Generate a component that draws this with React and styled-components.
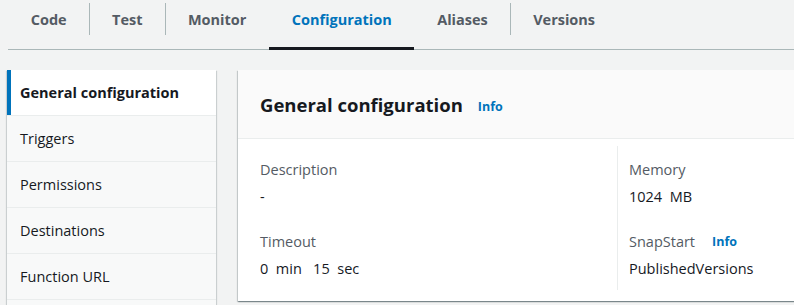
import React from "react";
import styled, { createGlobalStyle } from "styled-components";

const GlobalStyle = createGlobalStyle`
  html, body {
    margin: 0;
    padding: 0;
    background: #f2f3f3;
    font-family: "Open Sans", "Liberation Sans", sans-serif;
    color: #16191f;
    overflow: hidden;
  }
`;

const Page = styled.div`
  width: 794px;
  height: 305px;
  overflow: hidden;
`;

const TabBar = styled.div`
  display: flex;
  height: 50px;
  margin-left: 8px;
  border-bottom: 1px solid #aab7b8;
  box-sizing: border-box;
`;

const Tab = styled.div`
  position: relative;
  display: flex;
  align-items: flex-start;
  padding: 9px 22.7px 0;
  font-size: 14.5px;
  font-weight: 700;
  line-height: 22px;
  white-space: nowrap;
  color: ${(p) => (p.$active ? "#0073bb" : "#545b64")};
  border-bottom: 3px solid ${(p) => (p.$active ? "#16191f" : "transparent")};
  margin-bottom: -1px;
  & + &::before {
    content: "";
    position: absolute;
    left: 0;
    top: 3px;
    height: 32px;
    border-left: 1px solid #aab7b8;
  }
`;

const Layout = styled.div`
  display: flex;
  gap: 22px;
  padding: 20px 0 0 7px;
  align-items: flex-start;
`;

const Nav = styled.nav`
  flex: 0 0 209px;
  display: flex;
  flex-direction: column;
  background: #eaeded;
  box-shadow: 0 1px 1px 0 rgba(0, 28, 36, 0.25), 1px 1px 1px 0 rgba(0, 28, 36, 0.12),
    -1px 1px 1px 0 rgba(0, 28, 36, 0.12);
`;

const NavItem = styled.div`
  height: 45px;
  margin-bottom: 1px;
  display: flex;
  align-items: center;
  padding-left: ${(p) => (p.$active ? "9px" : "13px")};
  border-left: ${(p) => (p.$active ? "4px solid #0073bb" : "none")};
  background: ${(p) => (p.$active ? "#ffffff" : "#f8f9f9")};
  font-size: 14.5px;
  font-weight: ${(p) => (p.$active ? 700 : 400)};
  color: #16191f;
  white-space: nowrap;
`;

const Panel = styled.section`
  flex: 1 0 560px;
  background: #ffffff;
  box-shadow: 0 1px 1px 0 rgba(0, 28, 36, 0.3), 1px 1px 1px 0 rgba(0, 28, 36, 0.15),
    -1px 1px 1px 0 rgba(0, 28, 36, 0.15);
`;

const PanelHeader = styled.header`
  height: 69px;
  box-sizing: border-box;
  display: flex;
  align-items: center;
  gap: 15px;
  padding: 1px 22px 0;
  background: #fafafa;
  border-bottom: 1px solid #eaeded;
`;

const Title = styled.h2`
  margin: 0;
  font-size: 18.5px;
  font-weight: 700;
  line-height: 24px;
  color: #16191f;
  white-space: nowrap;
`;

const InfoLink = styled.a`
  font-size: 12.5px;
  font-weight: 700;
  color: #0073bb;
  text-decoration: none;
  margin-top: ${(p) => p.$offset || "3px"};
`;

const PanelBody = styled.div`
  display: grid;
  grid-template-columns: 357px 1fr;
  padding: 7px 0 11px 22px;
`;

const Column = styled.div`
  padding: 13px 12px 10px ${(p) => (p.$divided ? "11px" : "0")};
  border-left: ${(p) => (p.$divided ? "1px solid #eaeded" : "none")};
  display: flex;
  flex-direction: column;
`;

const Field = styled.div`
  & + & {
    margin-top: 23px;
  }
`;

const Label = styled.div`
  display: flex;
  align-items: center;
  gap: 17px;
  font-size: 14.5px;
  line-height: 22px;
  color: #545b64;
  white-space: nowrap;
`;

const Value = styled.div`
  margin-top: 5px;
  font-size: 14.5px;
  line-height: 22px;
  color: #16191f;
  white-space: pre;
`;

const tabs = ["Code", "Test", "Monitor", "Configuration", "Aliases", "Versions"];
const navItems = ["General configuration", "Triggers", "Permissions", "Destinations", "Function URL", ""];

export default function App() {
  return (
    <Page>
      <GlobalStyle />
      <TabBar>
        {tabs.map((t) => (
          <Tab key={t} $active={t === "Configuration"}>
            {t}
          </Tab>
        ))}
      </TabBar>
      <Layout>
        <Nav>
          {navItems.map((n, i) => (
            <NavItem key={i} $active={i === 0}>
              {n}
            </NavItem>
          ))}
        </Nav>
        <Panel>
          <PanelHeader>
            <Title>General configuration</Title>
            <InfoLink href="#">Info</InfoLink>
          </PanelHeader>
          <PanelBody>
            <Column>
              <Field>
                <Label>Description</Label>
                <Value>-</Value>
              </Field>
              <Field>
                <Label>Timeout</Label>
                <Value>0  min   15  sec</Value>
              </Field>
            </Column>
            <Column $divided>
              <Field>
                <Label>Memory</Label>
                <Value>1024  MB</Value>
              </Field>
              <Field>
                <Label>
                  SnapStart <InfoLink href="#" $offset="0px">Info</InfoLink>
                </Label>
                <Value>PublishedVersions</Value>
              </Field>
            </Column>
          </PanelBody>
        </Panel>
      </Layout>
    </Page>
  );
}
